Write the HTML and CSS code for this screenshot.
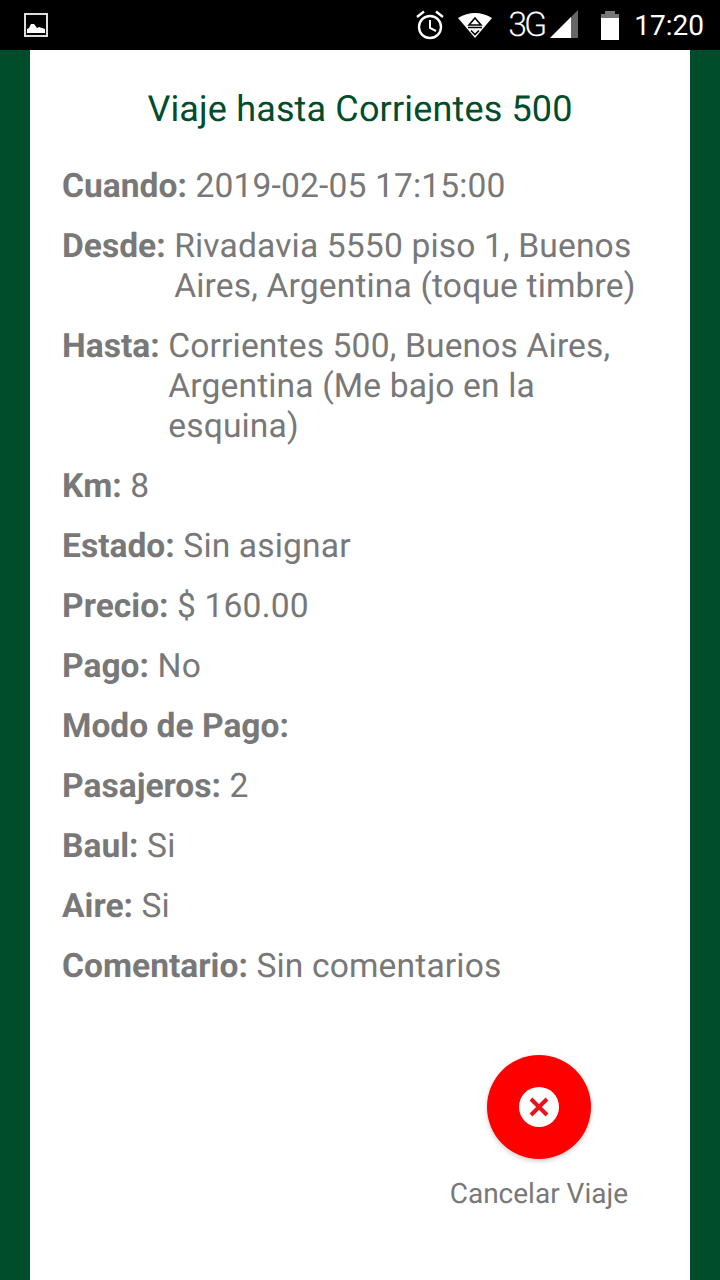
FILE: index.html

```html
<!DOCTYPE html>
<html lang="en">
<head>
  <meta charset="UTF-8">
  <meta name="viewport" content="width=device-width, initial-scale=1.0">
  <title>Viaje</title>
  <link rel="stylesheet" href="styles.css">
</head>
<body>
  <div class="status-bar">
    <svg class="icon-picture" width="24" height="24" viewBox="0 0 24 24">
      <rect x="1" y="1" width="22" height="22" fill="none" stroke="#ddd" stroke-width="2"/>
      <path d="M3 20v-4l2-1 2-4h3l3 4 2-1 3 1 3 1v4z" fill="#fff"/>
    </svg>
    <div class="status-right">
      <svg class="icon-alarm" width="30" height="30" viewBox="0 0 30 30">
        <circle cx="15" cy="17" r="11" fill="none" stroke="#fff" stroke-width="2.4"/>
        <path d="M15 10v8l6 3" fill="none" stroke="#fff" stroke-width="2"/>
        <path d="M2 7l7-5.500M28 7l-7-5.500" stroke="#fff" stroke-width="2.400"/>
      </svg>
      <svg class="icon-wifi" width="36" height="26" viewBox="0 0 36 26">
        <path d="M1 6Q18-4 35 6L18 26z" fill="#fff"/>
        <path d="M18 6l6 7H12z" fill="none" stroke="#000" stroke-width="1.600"/>
        <path d="M11 15.500h14M14 18.500l4 4 4-4" fill="none" stroke="#000" stroke-width="1.600"/>
      </svg>
      <span class="net">3G</span>
      <svg class="icon-signal" width="28" height="28" viewBox="0 0 28 28">
        <path d="M0 28L28 0v28z" fill="#666"/>
        <path d="M0 28L21 7v21z" fill="#fff"/>
      </svg>
      <svg class="icon-battery" width="20" height="29" viewBox="0 0 20 29">
        <path d="M5 0h10v3h4v26H1V3h4z" fill="#fff"/>
        <path d="M5 0h10v3h4v4H1V3h4z" fill="#777"/>
      </svg>
      <span class="clock">17:20</span>
    </div>
  </div>

  <div class="page">
    <main class="card">
      <h1 class="title">Viaje hasta Corrientes 500</h1>

      <div class="row"><b>Cuando:</b><span>2019-02-05 17:15:00</span></div>
      <div class="row"><b>Desde:</b><span>Rivadavia 5550 piso 1, Buenos Aires, Argentina (toque timbre)</span></div>
      <div class="row"><b>Hasta:</b><span>Corrientes 500, Buenos Aires, Argentina (Me bajo en la esquina)</span></div>
      <div class="row"><b>Km:</b><span>8</span></div>
      <div class="row"><b>Estado:</b><span>Sin asignar</span></div>
      <div class="row"><b>Precio:</b><span>$ 160.00</span></div>
      <div class="row"><b>Pago:</b><span>No</span></div>
      <div class="row"><b>Modo de Pago:</b></div>
      <div class="row"><b>Pasajeros:</b><span>2</span></div>
      <div class="row"><b>Baul:</b><span>Si</span></div>
      <div class="row"><b>Aire:</b><span>Si</span></div>
      <div class="row"><b>Comentario:</b><span>Sin comentarios</span></div>

      <div class="actions">
        <div class="action">
          <button class="fab" aria-label="Cancelar Viaje">
            <svg width="40" height="40" viewBox="0 0 40 40">
              <circle cx="20" cy="20" r="20" fill="#fff"/>
              <path d="M12 12l16 16M28 12L12 28" stroke="#e8141c" stroke-width="4"/>
            </svg>
          </button>
          <span class="action-label">Cancelar Viaje</span>
        </div>
      </div>
    </main>
  </div>
</body>
</html>
```

FILE: styles.css

```css
html, body {
  margin: 0;
  height: 1280px;
  overflow: hidden;
}
body {
  font-family: Roboto, sans-serif;
  background-color: #004d2b;
  display: flex;
  flex-direction: column;
  text-rendering: geometricPrecision;
}
.status-bar {
  height: 50px;
  background-color: #000;
  display: flex;
  align-items: center;
  justify-content: space-between;
  padding: 0 16px 0 24px;
  flex-shrink: 0;
}
.status-right {
  display: flex;
  align-items: center;
}
.icon-alarm {
  margin-right: 12px;
}
.icon-wifi {
  margin-right: 15px;
}
.net {
  color: #fff;
  font-size: 34px;
  letter-spacing: -3px;
  font-weight: 300;
  margin-right: 6px;
}
.icon-signal {
  margin-right: 22px;
  margin-bottom: 2px;
}
.icon-battery {
  margin-right: 14px;
}
.clock {
  color: #fff;
  font-size: 28px;
}
.page {
  flex: 1;
  padding: 0 30px;
  display: flex;
}
.card {
  flex: 1;
  background-color: #fff;
  padding: 37px 32px 0;
}
.title {
  margin: 0 0 36px;
  font-size: 36px;
  font-weight: 400;
  line-height: 44px;
  letter-spacing: 0.15px;
  color: #004d2b;
  text-align: center;
}
.row {
  display: flex;
  font-size: 33.6px;
  line-height: 40px;
  color: #787878;
  margin-bottom: 20px;
}
.row b {
  font-weight: 700;
  margin-right: 8.5px;
  flex-shrink: 0;
}
.row span {
  letter-spacing: 0.15px;
}
.actions {
  display: flex;
  justify-content: flex-end;
  margin-top: 68px;
}
.action {
  display: flex;
  flex-direction: column;
  align-items: center;
  margin-right: 30px;
}
.fab {
  width: 104px;
  height: 104px;
  border: none;
  border-radius: 50%;
  background-color: #fe0000;
  padding: 0;
  display: flex;
  align-items: center;
  justify-content: center;
  box-shadow: 0 2px 5px rgba(0, 0, 0, 0.2);
}
.action-label {
  margin-top: 18px;
  font-size: 28px;
  line-height: 34px;
  color: #787878;
}
```
